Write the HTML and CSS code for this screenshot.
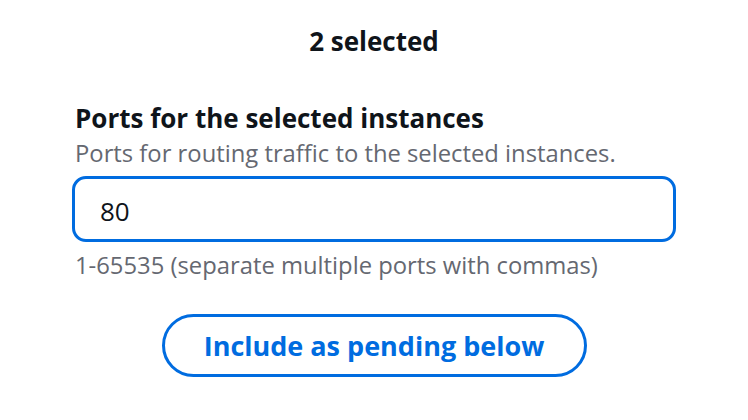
FILE: index.html
```html
<!DOCTYPE html>
<html lang="en">
<head>
<meta charset="utf-8">
<title>Ports</title>
<link rel="stylesheet" href="styles.css">
</head>
<body>
<main class="panel">
  <h2 class="panel-title">2 selected</h2>
  <section class="field">
    <label class="field-label" for="ports">Ports for the selected instances</label>
    <p class="field-desc">Ports for routing traffic to the selected instances.</p>
    <input class="field-input" id="ports" type="text" value="80">
    <p class="field-hint">1-65535 (separate multiple ports with commas)</p>
  </section>
  <div class="actions">
    <button class="btn-secondary" type="button">Include as pending below</button>
  </div>
</main>
</body>
</html>
```

FILE: styles.css
```css
html, body {
  margin: 0;
  padding: 0;
  background: #ffffff;
}

body {
  font-family: "Open Sans", "Noto Sans", sans-serif;
  color: #0f141a;
}

.panel {
  width: 604px;
  margin: 0 auto;
  padding-top: 24px;
  display: flex;
  flex-direction: column;
}

.panel-title {
  margin: 0;
  font-size: 26px;
  line-height: 34px;
  font-weight: 700;
  text-align: center;
}

.field {
  margin-top: 43px;
  display: flex;
  flex-direction: column;
}

.field-label {
  font-size: 26px;
  line-height: 34px;
  font-weight: 700;
  margin-left: 3px;
}

.field-desc {
  margin: 3px 0 0 3px;
  font-size: 23.8px;
  line-height: 30px;
  color: #656871;
}

.field-input {
  margin-top: 8px;
  box-sizing: border-box;
  width: 604px;
  height: 66px;
  border: 3px solid #006ce0;
  border-radius: 14px;
  padding: 4px 24px 0 25px;
  font-family: "Open Sans", "Noto Sans", sans-serif;
  font-size: 26px;
  color: #0f141a;
  outline: none;
  background: #ffffff;
}

.field-hint {
  margin: 8px 0 0 3px;
  font-size: 23.8px;
  line-height: 30px;
  color: #656871;
}

.actions {
  margin-top: 34px;
  display: flex;
  justify-content: center;
}

.btn-secondary {
  box-sizing: border-box;
  width: 425px;
  height: 63px;
  border: 3px solid #006ce0;
  border-radius: 32px;
  background: #ffffff;
  color: #006ce0;
  font-family: "Open Sans", "Noto Sans", sans-serif;
  font-size: 27px;
  font-weight: 700;
  padding: 0;
  cursor: pointer;
}
```
